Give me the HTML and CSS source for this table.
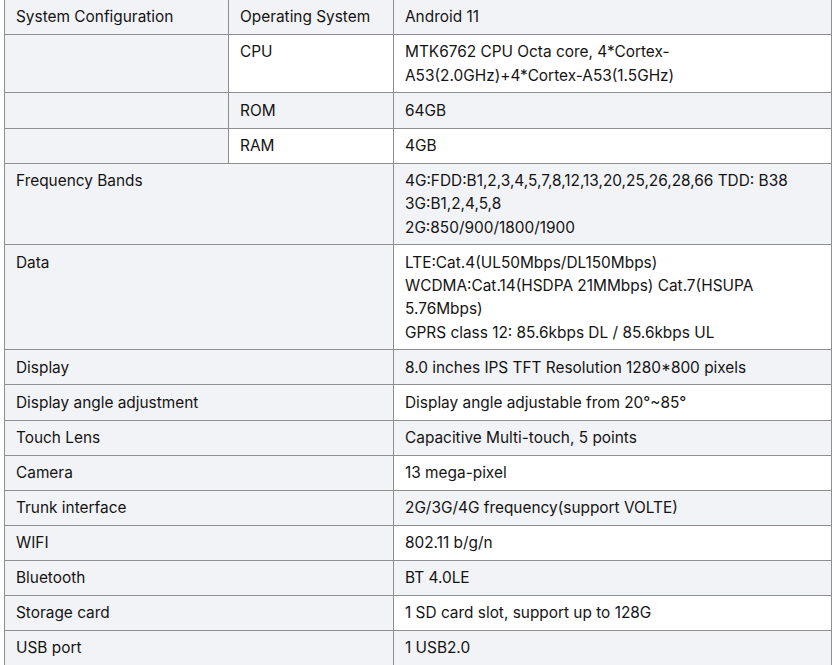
FILE: index.html
```html
<!DOCTYPE html>
<html lang="en">
<head>
<meta charset="utf-8">
<title>Specifications</title>
<link rel="stylesheet" href="styles.css">
</head>
<body>
<div class="wrap">
<table class="spec">
  <colgroup>
    <col class="c1">
    <col class="c2">
    <col class="c3">
  </colgroup>
  <tbody>
    <tr class="odd">
      <td class="head">System Configuration</td>
      <td>Operating System</td>
      <td>Android 11</td>
    </tr>
    <tr class="even">
      <td class="head"></td>
      <td>CPU</td>
      <td>MTK6762 CPU Octa core, 4*Cortex-A53(2.0GHz)+4*Cortex-A53(1.5GHz)</td>
    </tr>
    <tr class="odd">
      <td class="head"></td>
      <td>ROM</td>
      <td>64GB</td>
    </tr>
    <tr class="even">
      <td class="head"></td>
      <td>RAM</td>
      <td>4GB</td>
    </tr>
    <tr class="odd">
      <td class="head" colspan="2">Frequency Bands</td>
      <td>4G:FDD:B1,2,3,4,5,7,8,12,13,20,25,26,28,66 TDD: B38<br>3G:B1,2,4,5,8<br>2G:850/900/1800/1900</td>
    </tr>
    <tr class="even">
      <td class="head" colspan="2">Data</td>
      <td>LTE:Cat.4(UL50Mbps/DL150Mbps)<br>WCDMA:Cat.14(HSDPA 21MMbps) Cat.7(HSUPA 5.76Mbps)<br>GPRS class 12: 85.6kbps DL / 85.6kbps UL</td>
    </tr>
    <tr class="odd">
      <td class="head" colspan="2">Display</td>
      <td>8.0 inches IPS TFT Resolution 1280*800 pixels</td>
    </tr>
    <tr class="even">
      <td class="head" colspan="2">Display angle adjustment</td>
      <td>Display angle adjustable from 20°~85°</td>
    </tr>
    <tr class="odd">
      <td class="head" colspan="2">Touch Lens</td>
      <td>Capacitive Multi-touch, 5 points</td>
    </tr>
    <tr class="even">
      <td class="head" colspan="2">Camera</td>
      <td>13 mega-pixel</td>
    </tr>
    <tr class="odd">
      <td class="head" colspan="2">Trunk interface</td>
      <td>2G/3G/4G frequency(support VOLTE)</td>
    </tr>
    <tr class="even">
      <td class="head" colspan="2">WIFI</td>
      <td>802.11 b/g/n</td>
    </tr>
    <tr class="odd">
      <td class="head" colspan="2">Bluetooth</td>
      <td>BT 4.0LE</td>
    </tr>
    <tr class="even">
      <td class="head" colspan="2">Storage card</td>
      <td>1 SD card slot, support up to 128G</td>
    </tr>
    <tr class="odd">
      <td class="head" colspan="2">USB port</td>
      <td>1 USB2.0</td>
    </tr>
  </tbody>
</table>
</div>
</body>
</html>
```
FILE: styles.css
```css
html, body {
  margin: 0;
  padding: 0;
  background: #ffffff;
}

.wrap {
  padding: 0 3px 0 4px;
}

.spec {
  width: 827px;
  border-collapse: collapse;
  table-layout: fixed;
  font-family: Inter, "Noto Sans", "Liberation Sans", sans-serif;
  font-size: 15.4px;
  line-height: 23.3px;
  color: #141414;
}

.c1 { width: 224px; }
.c2 { width: 165px; }
.c3 { width: 438px; }

.spec td {
  border: 1px solid #8e8e8e;
  padding: 5.3px 12px 5.5px 11px;
  vertical-align: top;
  text-align: left;
}

.spec tr:first-child td {
  border-top: none;
}

.spec tr.odd td {
  background: #f2f3f6;
}

.spec tr.even td {
  background: #ffffff;
}

.spec tr td.head {
  background: #f2f3f6;
}
```
